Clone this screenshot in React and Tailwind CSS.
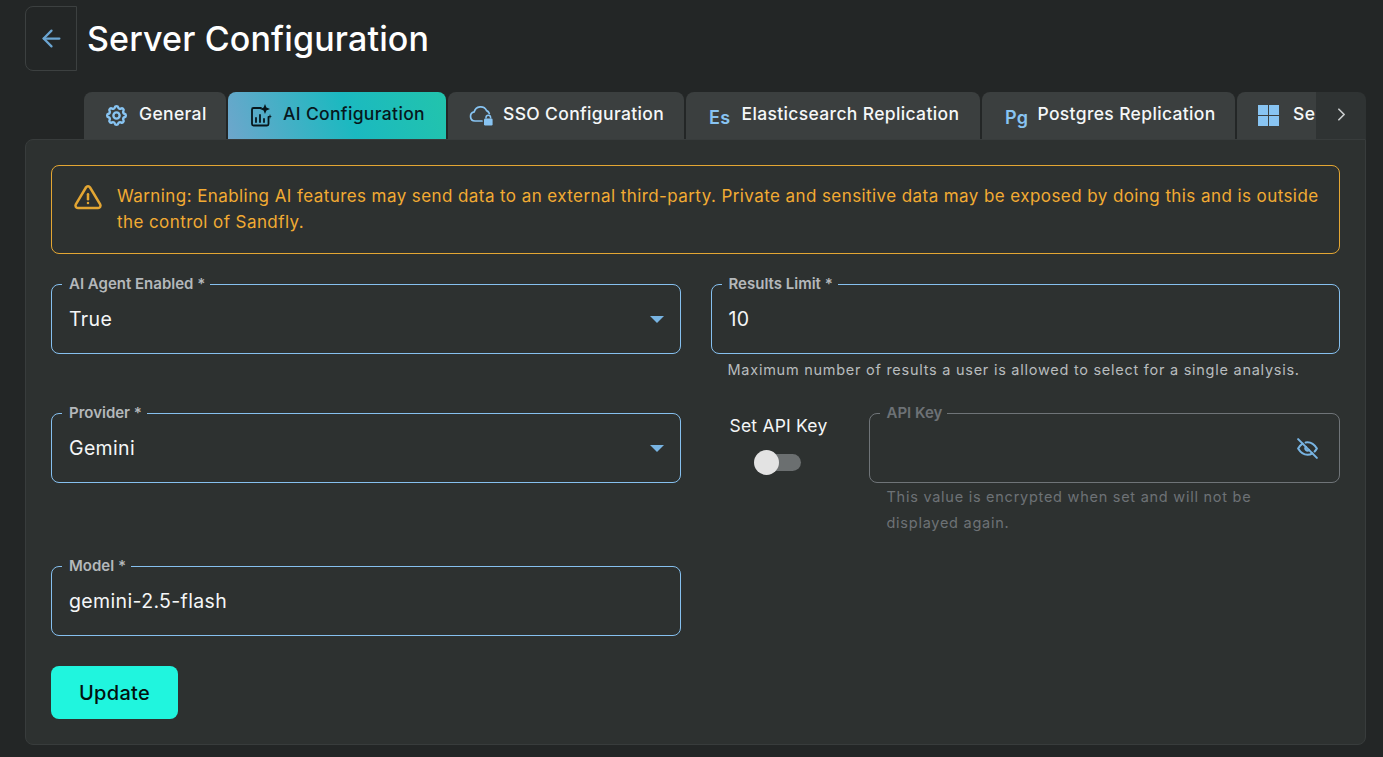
import React from 'react';
import { ArrowLeft, ChevronRight } from 'lucide-react';
import { TbSettings, TbAlertTriangle, TbEyeOff } from 'react-icons/tb';

const AiIcon = () => (
  <svg width="22" height="24" viewBox="0 0 22 24" fill="none" stroke="currentColor" strokeWidth="1.8" strokeLinecap="round" strokeLinejoin="round">
    <path d="M11 5H3.5A1.5 1.5 0 0 0 2 6.5V21a1.5 1.5 0 0 0 1.5 1.5H17a1.5 1.5 0 0 0 1.5-1.5V14" />
    <path d="M6 19v-4M10 19v-7M14 19v-3" />
    <path d="M15 1l1.4 3.6L20 6l-3.6 1.4L15 11l-1.4-3.6L10 6l3.6-1.4z" fill="currentColor" stroke="none" />
    <path d="M20 11l.6 1.9 1.4.6-1.4.6-.6 1.9-.6-1.9-1.4-.6 1.4-.6z" fill="currentColor" stroke="none" />
  </svg>
);

const CloudLockIcon = () => (
  <svg width="24" height="22" viewBox="0 0 24 22" fill="none">
    <path d="M13 17H6a4.6 4.6 0 0 1-.8-9.1A6.6 6.6 0 0 1 17.6 6.6a5 5 0 0 1 2.7 2.9" stroke="currentColor" strokeWidth="1.7" strokeLinecap="round" />
    <path d="M17 14.5v-1a2.3 2.3 0 0 1 4.6 0v1" stroke="currentColor" strokeWidth="1.5" />
    <rect x="15" y="14.5" width="8.6" height="7" rx="1.2" fill="currentColor" />
  </svg>
);

const WindowsIcon = () => (
  <svg width="21" height="21" viewBox="0 0 21 21" fill="currentColor">
    <rect x="0" y="0" width="10" height="10" />
    <rect x="11" y="0" width="10" height="10" />
    <rect x="0" y="11" width="10" height="10" />
    <rect x="11" y="11" width="10" height="10" />
  </svg>
);

const tabs = [
  { label: 'General', icon: <TbSettings size={25} strokeWidth={2.3} />, width: 'w-[142px]', pad: 'pl-[20px] gap-[10px]' },
  { label: 'AI Configuration', icon: <AiIcon />, width: 'w-[218px]', pad: 'pl-[22px] gap-[11px]', active: true },
  { label: 'SSO Configuration', icon: <CloudLockIcon />, width: 'w-[236px]', pad: 'pl-[21px] gap-[10px]' },
  { label: 'Elasticsearch Replication', icon: <span className="text-[18px] font-semibold pt-[4px]">Es</span>, width: 'w-[294px]', pad: 'pl-[23px] gap-[11px]' },
  { label: 'Postgres Replication', icon: <span className="text-[18px] font-semibold pt-[4px]">Pg</span>, width: 'w-[253px]', pad: 'pl-[23px] gap-[9px]' },
  { label: 'Server Settings', icon: <WindowsIcon />, width: 'w-[140px]', pad: 'pl-[21px] gap-[14px]' },
];

const Field = ({ label, value, select, disabled }) => (
  <div className={`relative h-[70px] rounded-lg border flex items-center justify-between pl-[17px] pr-[16px] ${disabled ? 'border-[#6f7478]' : 'border-[#86c0ef]'}`}>
    <span className={`absolute -top-[10px] left-[10px] bg-[#2d3130] pl-[7px] pr-[5px] text-[15px] leading-[17px] font-semibold ${disabled ? 'text-[#6d7276]' : 'text-[#b4b8bb]'}`}>
      {label}
    </span>
    <span className="pt-[1px] text-[19.5px] tracking-[0.35px] text-[#f4f6f7]">{value}</span>
    {select && <span className="w-0 h-0 border-x-[7px] border-x-transparent border-t-[7px] border-t-[#78b4e2]" />}
    {disabled && <TbEyeOff size={25} className="ml-auto mr-[3px] text-[#78b4e2]" />}
  </div>
);

export default function App() {
  return (
    <div className="min-h-[757px] bg-[#232626] font-['Inter',sans-serif] pl-[25px] pr-[17px] pt-[6px] pb-3">
      <div className="flex items-center gap-[10px]">
        <button className="w-[52px] h-[65px] rounded-l-lg border border-[#3c4040] flex items-center justify-center text-[#6ba5d2]">
          <ArrowLeft size={27} strokeWidth={2} />
        </button>
        <h1 className="pt-[1px] text-[34px] font-medium tracking-[0.15px] text-white leading-none">Server Configuration</h1>
      </div>

      <div className="mt-[21px] pl-[59px] flex h-[47px]">
        <div className="w-[1232px] flex gap-[2px] overflow-hidden">
          {tabs.map((t) => (
            <div
              key={t.label}
              className={`${t.width} ${t.pad} shrink-0 rounded-t-lg flex items-start pt-[11px] text-[17.5px] font-medium tracking-[0.35px] whitespace-nowrap ${
                t.active ? 'bg-[linear-gradient(70deg,#6ea6cc_0%,#1bb9c0_55%,#22c4ac_100%)] text-[#07171c]' : 'bg-[#3b3f3f] text-[#f5f7f8]'
              }`}
            >
              <span className={`h-[24px] flex items-center ${t.active ? 'text-[#07171c]' : 'text-[#88c4f2]'}`}>{t.icon}</span>
              <span className="leading-[22px]">{t.label}</span>
            </div>
          ))}
        </div>
        <div className="w-[50px] rounded-tr-lg bg-[#2f3333] flex items-center justify-center text-[#c9cccd] pb-[2px]">
          <ChevronRight size={21} />
        </div>
      </div>

      <div className="h-[606px] rounded-b-lg rounded-tl-lg border border-[#383c3c] bg-[#2d3130] pt-[25px] px-[25px]">
        <div className="h-[89px] rounded-lg border border-[#e3a633] flex items-start pl-[21px] pr-[18px] pt-[17px] gap-[14px]">
          <TbAlertTriangle size={30} className="text-[#e3a633] shrink-0" />
          <p className="text-[17px] leading-[26px] tracking-[0.42px] text-[#f2ab33]">
            Warning: Enabling AI features may send data to an external third-party. Private and sensitive data may be exposed by doing this and is outside the control of Sandfly.
          </p>
        </div>

        <div className="mt-[30px] grid grid-cols-2 gap-x-[30px]">
          <div className="h-[129px]">
            <Field label="AI Agent Enabled *" value="True" select />
          </div>
          <div className="h-[129px]">
            <Field label="Results Limit *" value="10" />
            <p className="mt-[7px] pl-[17px] text-[14.5px] leading-[18px] tracking-[0.74px] text-[#b8bcbe]">
              Maximum number of results a user is allowed to select for a single analysis.
            </p>
          </div>

          <div className="h-[153px]">
            <Field label="Provider *" value="Gemini" select />
          </div>
          <div className="h-[153px] flex">
            <div className="w-[136px] shrink-0 flex flex-col items-center pt-[1px]">
              <span className="text-[17.5px] leading-[24px] tracking-[0.2px] text-[#f4f6f7]">Set API Key</span>
              <div className="relative mt-[16px] mr-[2px] w-[46px] h-[17px] rounded-full bg-[#6b6f70]">
                <span className="absolute -left-[1px] -top-[4px] w-[25px] h-[25px] rounded-full bg-[#e3e3e3]" />
              </div>
            </div>
            <div className="ml-[22px] flex-1">
              <Field label="API Key" value="" disabled />
              <p className="mt-[1px] pl-[18px] pr-[60px] text-[14.5px] leading-[26px] tracking-[0.74px] text-[#6d7276]">
                This value is encrypted when set and will not be displayed again.
              </p>
            </div>
          </div>

          <div>
            <Field label="Model *" value="gemini-2.5-flash" />
          </div>
        </div>

        <button className="mt-[30px] w-[127px] h-[53px] rounded-lg bg-[#20f5de] pt-[1px] text-[20px] font-medium text-[#03110f] tracking-[0.3px]">
          Update
        </button>
      </div>
    </div>
  );
}
